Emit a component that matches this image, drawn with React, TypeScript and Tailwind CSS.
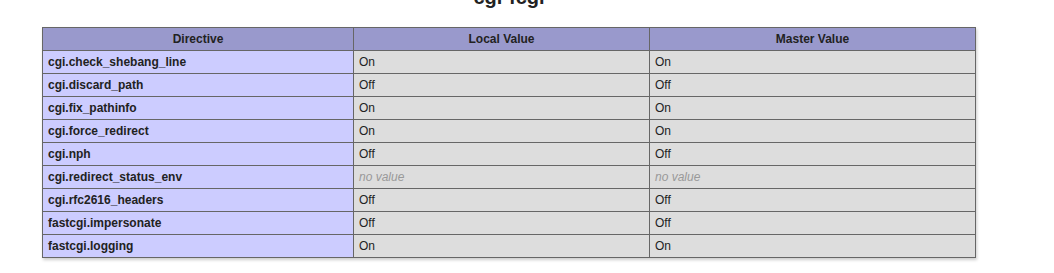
const rows: [string, string, string][] = [
  ['cgi.check_shebang_line', 'On', 'On'],
  ['cgi.discard_path', 'Off', 'Off'],
  ['cgi.fix_pathinfo', 'On', 'On'],
  ['cgi.force_redirect', 'On', 'On'],
  ['cgi.nph', 'Off', 'Off'],
  ['cgi.redirect_status_env', '', ''],
  ['cgi.rfc2616_headers', 'Off', 'Off'],
  ['fastcgi.impersonate', 'Off', 'Off'],
  ['fastcgi.logging', 'On', 'On'],
];

function Val({ v }: { v: string }) {
  if (!v) return <i className="text-[#999]">no value</i>;
  return <>{v}</>;
}

export default function App() {
  return (
    <div className="bg-white text-[#222] font-['Liberation_Sans',Arial,sans-serif] h-[273px] overflow-hidden pl-[42px]">
      <div className="w-[934px] -mt-[14px]">
        <h2 className="text-center text-[20px] font-bold leading-[23px] mb-[18px]">cgi-fcgi</h2>
        <table className="w-[934px] table-fixed border-collapse text-[12px] leading-[14px] shadow-[1px_2px_3px_#ccc]">
          <colgroup>
            <col className="w-[311px]" />
            <col className="w-[296px]" />
            <col />
          </colgroup>
          <thead>
            <tr className="bg-[#99c] font-bold">
              <th className="border border-[#666] px-[5px] py-[4px] text-center">Directive</th>
              <th className="border border-[#666] px-[5px] py-[4px] text-center">Local Value</th>
              <th className="border border-[#666] px-[5px] py-[4px] text-center">Master Value</th>
            </tr>
          </thead>
          <tbody>
            {rows.map(([name, local, master]) => (
              <tr key={name}>
                <td className="border border-[#666] bg-[#ccf] px-[5px] py-[4px] font-bold align-baseline">{name}</td>
                <td className="border border-[#666] bg-[#ddd] px-[5px] py-[4px] align-baseline"><Val v={local} /></td>
                <td className="border border-[#666] bg-[#ddd] px-[5px] py-[4px] align-baseline"><Val v={master} /></td>
              </tr>
            ))}
          </tbody>
        </table>
      </div>
    </div>
  );
}
